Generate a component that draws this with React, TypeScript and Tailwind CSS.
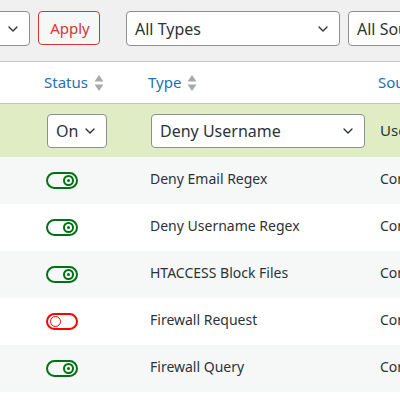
import { ChevronDown } from "lucide-react";

type Rule = { on: boolean; type: string; source: string };

const rules: Rule[] = [
  { on: true, type: "Deny Email Regex", source: "Core" },
  { on: true, type: "Deny Username Regex", source: "Core" },
  { on: true, type: "HTACCESS Block Files", source: "Core" },
  { on: false, type: "Firewall Request", source: "Core" },
  { on: true, type: "Firewall Query", source: "Core" },
];

function SortIcon() {
  return (
    <svg width="10" height="18" viewBox="0 0 10 18" className="ml-1.5 shrink-0">
      <path d="M5 1 L9.5 7.5 H0.5 Z" fill="#a7aaad" />
      <path d="M5 17 L9.5 10.5 H0.5 Z" fill="#a7aaad" />
    </svg>
  );
}

function Toggle({ on }: { on: boolean }) {
  const color = on ? "border-[#007017]" : "border-[#ff0000]";
  return (
    <div
      className={`flex h-[17px] w-[32px] items-center rounded-full border-2 px-[2px] ${color} ${
        on ? "justify-end" : "justify-start"
      }`}
    >
      {on ? (
        <div className="flex h-[11px] w-[11px] items-center justify-center rounded-full border-2 border-[#007017]">
          <div className="h-[3px] w-[3px] rounded-full bg-[#007017]" />
        </div>
      ) : (
        <div className="h-[11px] w-[11px] rounded-full border-[1.5px] border-[#ff0000]" />
      )}
    </div>
  );
}

function Select({ label, className }: { label: string; className: string }) {
  return (
    <div
      className={`flex items-center justify-between rounded border border-[#8c8f94] bg-white pl-2 pr-2 text-[16px] text-[#2c3338] ${className}`}
    >
      <span className="whitespace-nowrap">{label}</span>
      <ChevronDown className="h-4 w-4 shrink-0 text-[#2c3338]" strokeWidth={2} />
    </div>
  );
}

export default function App() {
  return (
    <div
      className="h-[400px] w-[400px] overflow-hidden bg-white text-[#2c3338]"
      style={{ fontFamily: '"Noto Sans", "Open Sans", sans-serif' }}
    >
      {/* filtros */}
      <div className="flex h-[62px] items-start gap-2 overflow-hidden border-b border-[#c3c4c7] bg-[#f0f0f1] pt-[11px] whitespace-nowrap">
        <div className="-ml-[20px] flex h-[35px] w-[50px] shrink-0 items-center justify-end rounded border border-[#8c8f94] bg-white pr-2">
          <ChevronDown className="h-4 w-4 text-[#2c3338]" strokeWidth={2} />
        </div>
        <button className="h-[34px] w-[62px] shrink-0 rounded border border-[#d63638] bg-[#f6f7f7] pl-[2px] text-[15px] text-[#d63638]">
          Apply
        </button>
        <Select label="All Types" className="ml-[18px] h-[35px] w-[214px] shrink-0" />
        <Select label="All Sources" className="h-[35px] w-[140px] shrink-0" />
      </div>

      {/* cabeçalho */}
      <div className="flex h-[42px] items-center overflow-hidden border-b border-[#c3c4c7] text-[15px] text-[#2271b1] whitespace-nowrap">
        <div className="flex w-[148px] shrink-0 items-center pl-[44px]">
          Status
          <SortIcon />
        </div>
        <div className="flex w-[230px] shrink-0 items-center">
          Type
          <SortIcon />
        </div>
        <div>Source</div>
      </div>

      {/* linha em edição */}
      <div className="flex h-[53px] items-center overflow-hidden bg-[#dfecc4] whitespace-nowrap">
        <div className="w-[151px] shrink-0 pl-[47px]">
          <Select label="On" className="h-[34px] w-[60px]" />
        </div>
        <Select label="Deny Username" className="h-[34px] w-[214px] shrink-0" />
        <div className="ml-[15px] text-[15px]">User</div>
      </div>

      {/* linhas */}
      {rules.map((r, i) => (
        <div
          key={r.type}
          className={`flex h-[47px] items-center overflow-hidden text-[14px] whitespace-nowrap ${
            i % 2 === 0 ? "bg-[#f6f7f7]" : "bg-white"
          }`}
        >
          <div className="w-[150px] shrink-0 pl-[46px]">
            <Toggle on={r.on} />
          </div>
          <div className="-mt-[4px] w-[230px] shrink-0">{r.type}</div>
          <div className="-mt-[4px]">{r.source}</div>
        </div>
      ))}
    </div>
  );
}
